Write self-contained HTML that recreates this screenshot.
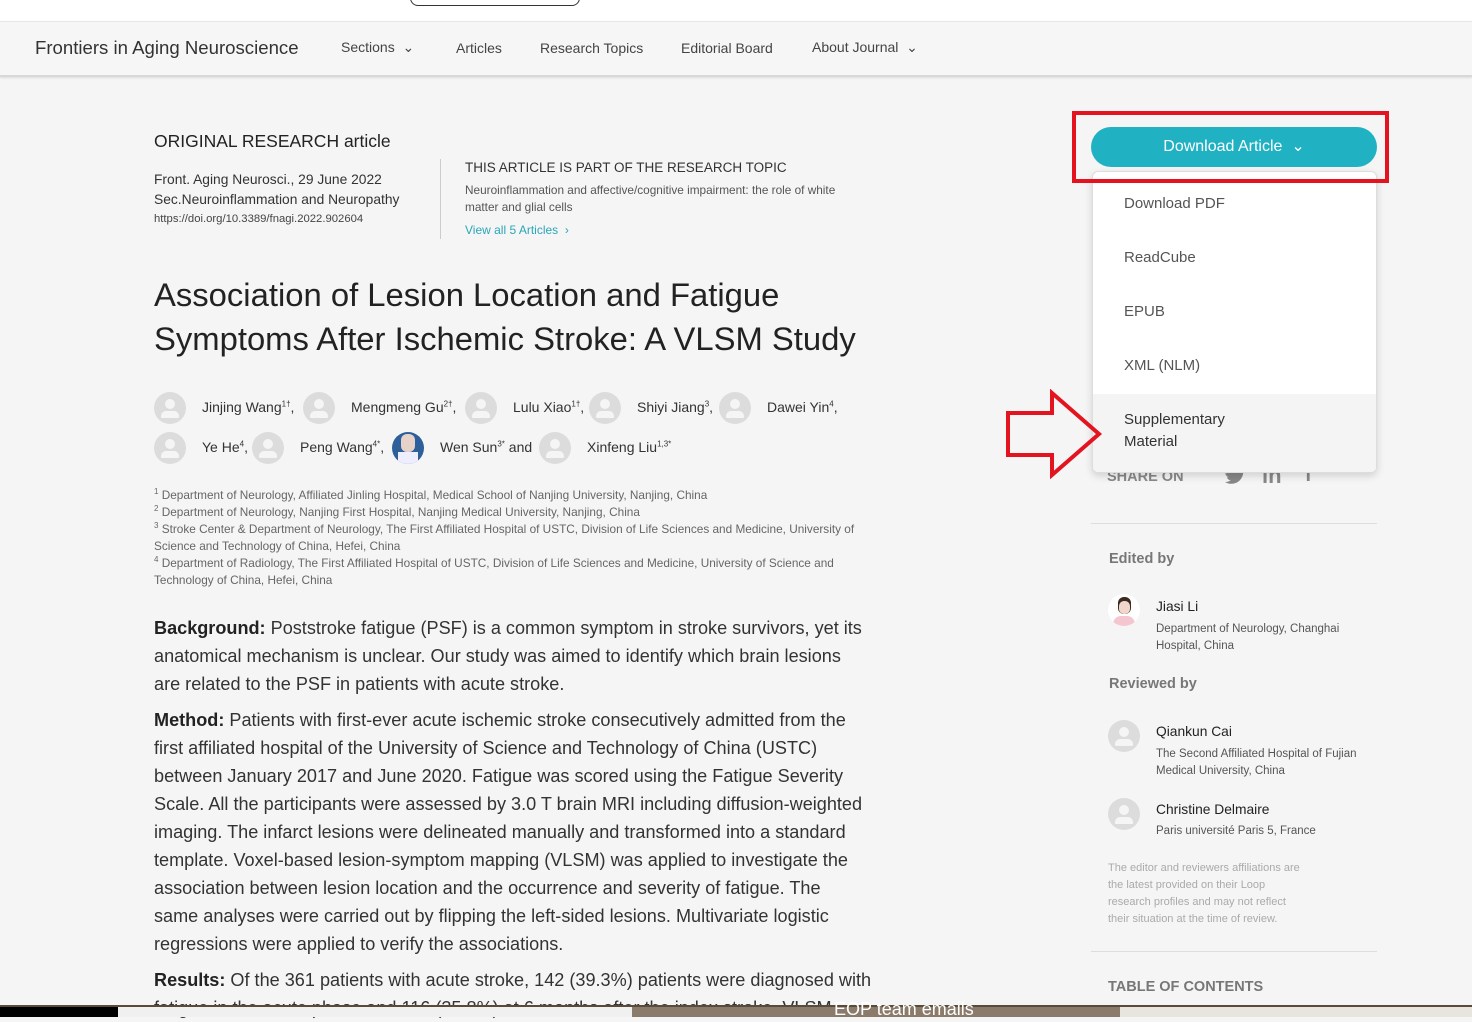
<!DOCTYPE html>
<html><head><meta charset="utf-8"><style>
*{margin:0;padding:0;box-sizing:border-box}
body{width:1472px;height:1017px;overflow:hidden;background:#f5f5f5;font-family:"Liberation Sans",sans-serif;color:#333;position:relative}
.a{position:absolute;white-space:nowrap}
.av{position:absolute;width:32px;height:32px;border-radius:50%;background:#dcdcdc;overflow:hidden}
.av:before{content:"";position:absolute;left:11px;top:7px;width:10px;height:10px;border-radius:50%;background:#f5f5f5}
.av:after{content:"";position:absolute;left:7px;top:19px;width:18px;height:7px;border-radius:5px 5px 1px 1px;background:#f5f5f5}
.nav{font-size:14px;color:#444}
.abs{font-size:18.1px;line-height:28px;color:#333}
.abs b{color:#222}
.aff{font-size:11.8px;line-height:17px;color:#666}
.dd{font-size:15px;color:#555}
sup{font-size:8px;line-height:0}
</style></head><body>
<div class="a" style="left:0;top:0;width:1472px;height:21px;background:#fff"></div>
<div class="a" style="left:410px;top:-10px;width:170px;height:16px;border:1.5px solid #333;border-radius:8px"></div>
<div class="a" style="left:0;top:21px;width:1472px;height:56px;background:#f6f6f6;border-top:1px solid #e6e6e6;border-bottom:2px solid #d8d8d8;box-shadow:0 1px 2px rgba(0,0,0,.1)"></div>
<div class="a" style="left:35px;top:37px;font-size:18.6px;color:#333">Frontiers in Aging Neuroscience</div>
<div class="a nav" style="left:341px;top:39px">Sections &nbsp;⌄</div>
<div class="a nav" style="left:456px;top:40px">Articles</div>
<div class="a nav" style="left:540px;top:40px">Research Topics</div>
<div class="a nav" style="left:681px;top:40px">Editorial Board</div>
<div class="a nav" style="left:812px;top:39px">About Journal &nbsp;⌄</div>

<div class="a" style="left:154px;top:131px;font-size:17.5px;color:#222">ORIGINAL RESEARCH article</div>
<div class="a" style="left:154px;top:170px;font-size:13.8px;line-height:20px;color:#333">Front. Aging Neurosci., 29 June 2022<br>Sec.Neuroinflammation and Neuropathy</div>
<div class="a" style="left:154px;top:213px;font-size:11.3px;color:#444">https://doi.org/10.3389/fnagi.2022.902604</div>
<div class="a" style="left:440px;top:159px;width:1px;height:80px;background:#ccc"></div>
<div class="a" style="left:465px;top:160px;font-size:13.5px;color:#333">THIS ARTICLE IS PART OF THE RESEARCH TOPIC</div>
<div class="a" style="left:465px;top:182px;font-size:11.8px;line-height:17px;color:#555">Neuroinflammation and affective/cognitive impairment: the role of white<br>matter and glial cells</div>
<div class="a" style="left:465px;top:223px;font-size:12px;color:#2aa6b8">View all 5 Articles &nbsp;›</div>

<div class="a" style="left:154px;top:273px;font-size:32.8px;line-height:44px;color:#222">Association of Lesion Location and Fatigue<br>Symptoms After Ischemic Stroke: A VLSM Study</div>

<div class="av" style="left:154px;top:392px"></div><div class="a" style="left:202px;top:399px;font-size:14px">Jinjing Wang<sup>1†</sup>,</div>
<div class="av" style="left:303px;top:392px"></div><div class="a" style="left:351px;top:399px;font-size:14px">Mengmeng Gu<sup>2†</sup>,</div>
<div class="av" style="left:465px;top:392px"></div><div class="a" style="left:513px;top:399px;font-size:14px">Lulu Xiao<sup>1†</sup>,</div>
<div class="av" style="left:589px;top:392px"></div><div class="a" style="left:637px;top:399px;font-size:14px">Shiyi Jiang<sup>3</sup>,</div>
<div class="av" style="left:719px;top:392px"></div><div class="a" style="left:767px;top:399px;font-size:14px">Dawei Yin<sup>4</sup>,</div>
<div class="av" style="left:154px;top:432px"></div><div class="a" style="left:202px;top:439px;font-size:14px">Ye He<sup>4</sup>,</div>
<div class="av" style="left:252px;top:432px"></div><div class="a" style="left:300px;top:439px;font-size:14px">Peng Wang<sup>4*</sup>,</div>
<div class="a" style="left:392px;top:432px;width:32px;height:32px;border-radius:50%;background:#2d5f9a;overflow:hidden"><div style="position:absolute;left:9px;top:2px;width:14px;height:18px;border-radius:6px;background:#e6d2c8"></div><div style="position:absolute;left:6px;top:20px;width:20px;height:14px;background:#eef"></div></div>
<div class="a" style="left:440px;top:439px;font-size:14px">Wen Sun<sup>3*</sup> and</div>
<div class="av" style="left:539px;top:432px"></div><div class="a" style="left:587px;top:439px;font-size:14px">Xinfeng Liu<sup>1,3*</sup></div>

<div class="a aff" style="left:154px;top:487px"><sup>1</sup> Department of Neurology, Affiliated Jinling Hospital, Medical School of Nanjing University, Nanjing, China<br><sup>2</sup> Department of Neurology, Nanjing First Hospital, Nanjing Medical University, Nanjing, China<br><sup>3</sup> Stroke Center &amp; Department of Neurology, The First Affiliated Hospital of USTC, Division of Life Sciences and Medicine, University of<br>Science and Technology of China, Hefei, China<br><sup>4</sup> Department of Radiology, The First Affiliated Hospital of USTC, Division of Life Sciences and Medicine, University of Science and<br>Technology of China, Hefei, China</div>

<div class="a abs" style="left:154px;top:614px"><b>Background:</b> Poststroke fatigue (PSF) is a common symptom in stroke survivors, yet its<br>anatomical mechanism is unclear. Our study was aimed to identify which brain lesions<br>are related to the PSF in patients with acute stroke.</div>
<div class="a abs" style="left:154px;top:706px"><b>Method:</b> Patients with first-ever acute ischemic stroke consecutively admitted from the<br>first affiliated hospital of the University of Science and Technology of China (USTC)<br>between January 2017 and June 2020. Fatigue was scored using the Fatigue Severity<br>Scale. All the participants were assessed by 3.0 T brain MRI including diffusion-weighted<br>imaging. The infarct lesions were delineated manually and transformed into a standard<br>template. Voxel-based lesion-symptom mapping (VLSM) was applied to investigate the<br>association between lesion location and the occurrence and severity of fatigue. The<br>same analyses were carried out by flipping the left-sided lesions. Multivariate logistic<br>regressions were applied to verify the associations.</div>
<div class="a abs" style="left:154px;top:966px"><b>Results:</b> Of the 361 patients with acute stroke, 142 (39.3%) patients were diagnosed with<br>fatigue in the acute phase and 116 (35.8%) at 6 months after the index stroke. VLSM</div>

<!-- right column -->
<div class="a" style="left:1107px;top:469px;font-size:14.5px;font-weight:bold;color:#888">SHARE ON</div>
<svg class="a" style="left:1224px;top:466px" width="22" height="20" viewBox="0 0 24 20"><path d="M23 2.5c-.8.4-1.7.6-2.6.7.9-.6 1.6-1.4 2-2.5-.9.5-1.9.9-2.9 1.1C18.6.9 17.4.3 16.1.3c-2.5 0-4.6 2-4.6 4.6 0 .4 0 .7.1 1C7.800 5.700 4.400 3.900 2.200 1.100c-.4.7-.6 1.500-.6 2.300 0 1.600.8 3 2 3.800-.8 0-1.500-.2-2.100-.6v.1c0 2.200 1.600 4.100 3.700 4.500-.4.1-.8.2-1.200.2-.3 0-.6 0-.9-.1.6 1.800 2.300 3.200 4.300 3.200-1.600 1.200-3.600 2-5.700 2H1c2 1.300 4.500 2 7 2 8.400 0 13-7 13-13v-.6c.9-.6 1.600-1.400 2.200-2.300z" fill="#888"/></svg>
<div class="a" style="left:1262px;top:463px;font-size:22px;font-weight:bold;color:#888">in</div>
<div class="a" style="left:1305px;top:464px;font-size:20px;font-weight:bold;color:#888">f</div>
<div class="a" style="left:1091px;top:523px;width:286px;height:1px;background:#ddd"></div>
<div class="a" style="left:1109px;top:551px;font-size:14.5px;font-weight:bold;color:#777">Edited by</div>
<div class="a" style="left:1108px;top:594px;width:32px;height:32px;border-radius:50%;background:#fff;overflow:hidden"><div style="position:absolute;left:10px;top:3px;width:13px;height:17px;border-radius:6px;background:#3a2a22"></div><div style="position:absolute;left:11px;top:7px;width:11px;height:13px;border-radius:5px;background:#f2d8cc"></div><div style="position:absolute;left:5px;top:22px;width:22px;height:12px;border-radius:8px 8px 0 0;background:#f3c6d0"></div></div>
<div class="a" style="left:1156px;top:599px;font-size:13.8px;color:#222">Jiasi Li</div>
<div class="a" style="left:1156px;top:621px;font-size:11.5px;line-height:17px;color:#555">Department of Neurology, Changhai<br>Hospital, China</div>
<div class="a" style="left:1109px;top:676px;font-size:14.5px;font-weight:bold;color:#777">Reviewed by</div>
<div class="av" style="left:1108px;top:720px"></div>
<div class="a" style="left:1156px;top:724px;font-size:13.8px;color:#222">Qiankun Cai</div>
<div class="a" style="left:1156px;top:746px;font-size:11.5px;line-height:17px;color:#555">The Second Affiliated Hospital of Fujian<br>Medical University, China</div>
<div class="av" style="left:1108px;top:798px"></div>
<div class="a" style="left:1156px;top:802px;font-size:13.8px;color:#222">Christine Delmaire</div>
<div class="a" style="left:1156px;top:825px;font-size:11.5px;color:#555">Paris université Paris 5, France</div>
<div class="a" style="left:1108px;top:860px;font-size:11px;line-height:17px;color:#aaa">The editor and reviewers affiliations are<br>the latest provided on their Loop<br>research profiles and may not reflect<br>their situation at the time of review.</div>
<div class="a" style="left:1091px;top:951px;width:286px;height:1px;background:#ddd"></div>
<div class="a" style="left:1108px;top:979px;font-size:14.5px;font-weight:bold;color:#777">TABLE OF CONTENTS</div>

<!-- dropdown -->
<div class="a" style="left:1091px;top:127px;width:286px;height:40px;border-radius:20px;background:#20b2c3;color:#fff;font-size:16px;text-align:center;line-height:40px">Download Article &nbsp;⌄</div>
<div class="a" style="left:1092px;top:171px;width:285px;height:302px;background:#fff;border:1px solid #ddd;border-radius:6px;box-shadow:0 3px 8px rgba(0,0,0,.15);overflow:hidden">
<div style="position:absolute;left:0;top:222px;width:285px;height:80px;background:#f4f4f4"></div>
</div>
<div class="a dd" style="left:1124px;top:195px">Download PDF</div>
<div class="a dd" style="left:1124px;top:249px">ReadCube</div>
<div class="a dd" style="left:1124px;top:303px">EPUB</div>
<div class="a dd" style="left:1124px;top:357px">XML (NLM)</div>
<div class="a dd" style="left:1124px;top:409px;line-height:22px;color:#333">Supplementary<br>Material</div>
<div class="a" style="left:1072px;top:111px;width:317px;height:72px;border:4px solid #e3141f"></div>
<svg class="a" style="left:1004px;top:389px" width="100" height="92"><polygon points="4,24 48,24 48,4 95,45 48,86 48,66 4,66" fill="none" stroke="#e3141f" stroke-width="4"/></svg>

<!-- bottom taskbar strip -->
<div class="a" style="left:0;top:1005px;width:1472px;height:12px;background:#8b7b6b;border-top:2px solid #5a4a3a"></div>
<div class="a" style="left:0;top:1007px;width:118px;height:10px;background:#000"></div>
<div class="a" style="left:118px;top:1007px;width:514px;height:10px;background:#f0f0f0"></div>
<div class="a" style="left:1120px;top:1007px;width:352px;height:10px;background:#e8e4de"></div>
<div class="a" style="left:834px;top:999px;font-size:18px;color:#fff">EOP team emails</div>
</body></html>
